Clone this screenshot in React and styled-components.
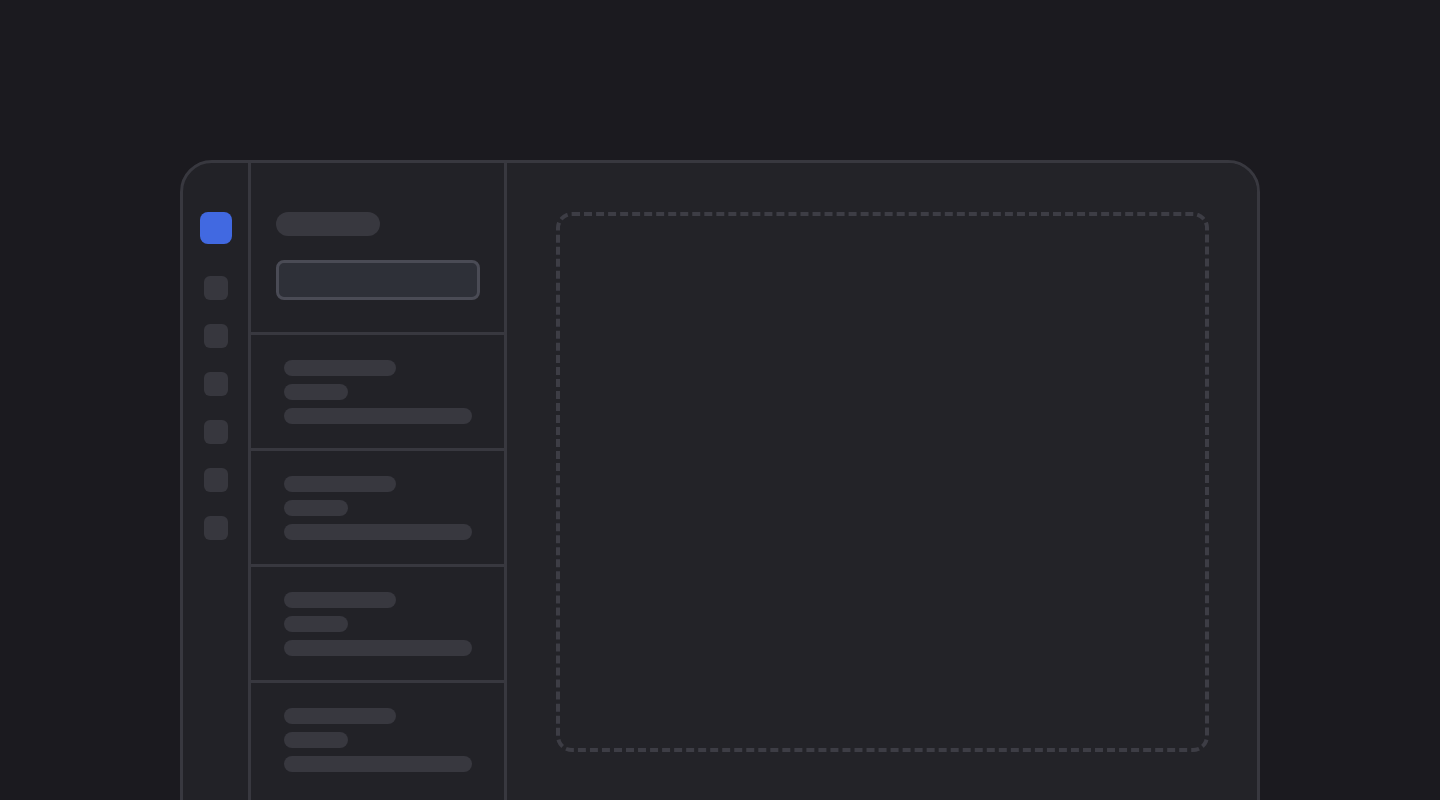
import React from 'react';
import styled, { createGlobalStyle } from 'styled-components';

const GlobalStyle = createGlobalStyle`
  * {
    box-sizing: border-box;
  }

  html,
  body {
    margin: 0;
    height: 100%;
    overflow: hidden;
    background: #1b1a1f;
    font-family: Inter, 'Liberation Sans', sans-serif;
  }
`;

const railItems = [0, 1, 2, 3, 4, 5];
const listItems = [0, 1, 2, 3];

export default function App() {
  return (
    <>
      <GlobalStyle />
      <Page>
        <Frame>
          {/* 왼쪽 아이콘 레일 */}
          <Rail>
            <BrandMark />
            <RailList>
              {railItems.map(i => (
                <RailIcon key={i} />
              ))}
            </RailList>
          </Rail>

          {/* 목록 패널 */}
          <ListPanel>
            <ListHeader>
              <Pill $width={104} $height={24} />
              <SearchBox />
            </ListHeader>
            {listItems.map(i => (
              <ListRow key={i}>
                <Pill $width={112} />
                <Pill $width={64} />
                <Pill $width={188} />
              </ListRow>
            ))}
          </ListPanel>

          {/* 메인 영역 */}
          <Main>
            <DropZone />
          </Main>
        </Frame>
      </Page>
    </>
  );
}

// 기본 스타일
const Page = styled.div`
  width: 100%;
  padding-top: 160px;
  display: flex;
  justify-content: center;
`;

const Frame = styled.div`
  width: 1080px;
  height: 720px;
  display: flex;
  align-items: flex-start;
  background: #222227;
  border: 3px solid #38383f;
  border-radius: 32px;
  overflow: hidden;
`;

// 레일 스타일
const Rail = styled.div`
  width: 68px;
  align-self: stretch;
  flex-shrink: 0;
  display: flex;
  flex-direction: column;
  align-items: center;
  padding-top: 49px;
  border-right: 3px solid #38383f;
`;

const BrandMark = styled.div`
  width: 32px;
  height: 32px;
  border-radius: 8px;
  background: #4169e1;
`;

const RailList = styled.div`
  display: flex;
  flex-direction: column;
  gap: 24px;
  margin-top: 32px;
`;

const RailIcon = styled.div`
  width: 24px;
  height: 24px;
  border-radius: 6px;
  background: #37373e;
`;

// 목록 패널 스타일
const ListPanel = styled.div`
  width: 256px;
  align-self: stretch;
  flex-shrink: 0;
  display: flex;
  flex-direction: column;
  border-right: 3px solid #38383f;
`;

const ListHeader = styled.div`
  display: flex;
  flex-direction: column;
  align-items: flex-start;
  gap: 24px;
  padding: 49px 24px 32px 25px;
  border-bottom: 3px solid #38383f;
`;

const SearchBox = styled.div`
  width: 204px;
  height: 40px;
  border-radius: 8px;
  background: #2e3038;
  border: 3px solid #4a4b55;
`;

const ListRow = styled.div`
  display: flex;
  flex-direction: column;
  align-items: flex-start;
  gap: 8px;
  padding: 25px 32px 24px 33px;
  border-bottom: 3px solid #38383f;
  flex-shrink: 0;

  &:last-child {
    border-bottom: none;
  }
`;

const Pill = styled.div`
  width: ${p => p.$width}px;
  height: ${p => p.$height || 16}px;
  border-radius: 999px;
  background: #38383f;
`;

// 메인 영역 스타일
const Main = styled.div`
  flex: 1;
  align-self: stretch;
  padding: 49px 48px 49px 49px;
  background: #232328;
`;

const DropZone = styled.div`
  height: 540px;
  border: 4px dashed #3d3d45;
  border-radius: 16px;
`;
